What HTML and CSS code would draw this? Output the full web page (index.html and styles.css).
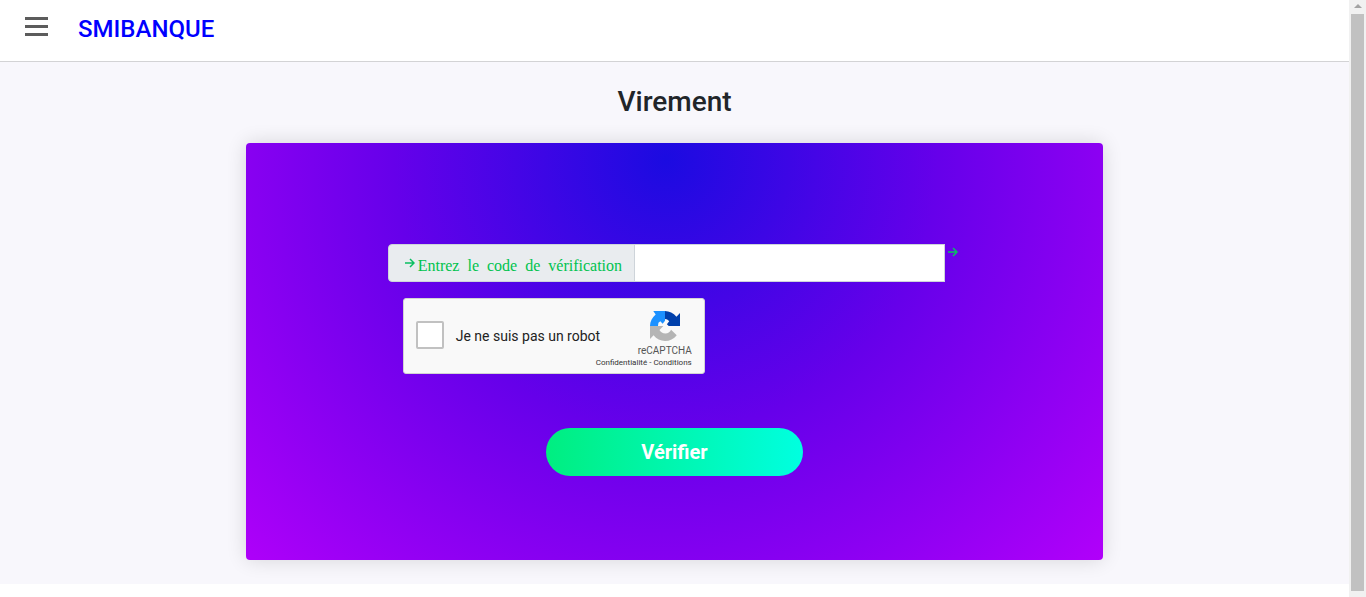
FILE: index.html
```html
<!DOCTYPE html>
<html lang="fr">
<head>
<meta charset="utf-8">
<meta name="viewport" content="width=device-width, initial-scale=1">
<title>SMIBANQUE - Virement</title>
<link rel="stylesheet" href="styles.css">
</head>
<body>
<div class="page">
  <header class="topbar">
    <button class="menu-button" type="button" aria-label="Menu">
      <span class="menu-line"></span><span class="menu-line"></span><span class="menu-line"></span>
    </button>
    <a class="brand" href="#">SMIBANQUE</a>
  </header>
  <main class="content">
    <h1 class="title">Virement</h1>
    <form class="card">
      <div class="fields">
        <div class="code-group">
          <label class="code-label" for="code">
            <svg class="arrow" viewBox="0 0 10 10" aria-hidden="true"><path d="M0 5H9M5 1L9 5L5 9"/></svg>
            <span>Entrez&nbsp; le&nbsp; code&nbsp; de&nbsp; vérification</span>
          </label>
          <input class="code-input" id="code" type="text">
          <span class="code-end"><svg class="arrow" viewBox="0 0 10 10" aria-hidden="true"><path d="M0 5H9M5 1L9 5L5 9"/></svg></span>
        </div>
        <div class="captcha">
          <input class="captcha-box" id="robot" type="checkbox">
          <label class="captcha-label" for="robot">Je ne suis pas un robot</label>
          <div class="captcha-brand">
            <svg class="captcha-logo" viewBox="0 0 64 64" aria-hidden="true">
              <path fill="#0040ab" d="M64 32V4.500L56.400 12.100C50.200 4.500 40.900 0 31.900 0V17C36.800 17 39 19 41 22L36 28L40 32Z"/>
              <path fill="#1c91ff" d="M32 0H7L12.100 7.600C4.500 13.800 0 23 0 32H17L18 25L22 22L27 27L32 21Z"/>
              <path fill="#b5b5b5" d="M0 32V59.500L7.600 51.900C13.800 59.500 22.500 64 32 64C42 64 51 59.500 57 51.500L45 40C43 44.500 38 48 33 48C27 48 23 45 20.200 40.500L28.500 32Z"/>
            </svg>
            <span class="captcha-name">reCAPTCHA</span>
            <span class="captcha-links"><a href="#">Confidentialité</a> - <a href="#">Conditions</a></span>
          </div>
        </div>
      </div>
      <button class="submit" type="submit">Vérifier</button>
    </form>
  </main>
</div>
<div class="scrollbar" aria-hidden="true">
  <span class="scroll-up"></span>
  <span class="scroll-thumb"></span>
</div>
</body>
</html>
```
FILE: styles.css
```css
* {
  box-sizing: border-box;
}

body {
  margin: 0;
  display: flex;
  min-height: 100vh;
  background: #fff;
  color: #212529;
  font-family: Roboto, "Liberation Sans", sans-serif;
}

a {
  color: inherit;
  text-decoration: none;
}

.page {
  flex: 1;
  min-width: 0;
}

.topbar {
  display: flex;
  align-items: center;
  gap: 30px;
  padding: 12px 25px 14px;
  border-bottom: 1px solid #d3d3d5;
}

.menu-button {
  display: flex;
  flex-direction: column;
  gap: 5px;
  width: 23px;
  padding: 0 0 6px;
  border: 0;
  background: none;
}

.menu-line {
  height: 3px;
  background: #5c5c5c;
}

.brand {
  color: #00f;
  font-size: 24px;
  font-weight: 500;
  line-height: 35px;
}

.content {
  display: flex;
  flex-direction: column;
  align-items: center;
  padding: 23px 16px 24px;
  background: #f8f7fc;
}

.title {
  margin: 0 0 24px;
  font-size: 28px;
  font-weight: 500;
  line-height: 34px;
}

.card {
  display: flex;
  flex-direction: column;
  align-items: center;
  gap: 54px;
  width: 65%;
  padding: 101px 0 84px;
  border-radius: 4px;
  background: radial-gradient(circle at 49% 4%, #1b0be1 0%, #6600ea 46%, #b100fa 100%);
  box-shadow: 0 0 20px rgba(0, 0, 0, 0.14);
}

.fields {
  display: flex;
  flex-direction: column;
  gap: 16px;
  width: 67%;
}

.code-group {
  display: flex;
}

.code-label {
  display: flex;
  align-items: center;
  gap: 3px;
  height: 38px;
  padding: 6px 12px 0 16px;
  border: 1px solid #ced4da;
  border-radius: 4px 0 0 4px;
  background: #e9ecef;
  color: #00c34e;
  font-family: "Liberation Serif", serif;
  font-size: 16px;
  line-height: 24px;
  white-space: nowrap;
}

.arrow {
  flex: none;
  width: 10px;
  height: 10px;
  fill: none;
  stroke: #0abf62;
  stroke-width: 1.500;
}

.code-label .arrow {
  margin-bottom: 6px;
}

.code-input {
  flex: 1;
  min-width: 0;
  height: 38px;
  margin-left: -1px;
  padding: 6px 12px;
  border: 1px solid #ced4da;
  border-radius: 0;
  background: #fff;
  font-size: 16px;
}

.code-end {
  display: flex;
  padding: 3px 3px 0 3px;
}

.captcha {
  display: flex;
  align-items: center;
  width: 302px;
  height: 76px;
  margin-left: 15px;
  padding: 0 12px;
  border: 1px solid #d3d3d3;
  border-radius: 3px;
  background: #f9f9f9;
}

.captcha-box {
  appearance: none;
  flex: none;
  width: 28px;
  height: 28px;
  margin: 0 12px 2px 0;
  border: 2px solid #c1c1c1;
  border-radius: 2px;
  background: #fff;
}

.captcha-label {
  color: #222;
  font-size: 14px;
  line-height: 17px;
  white-space: nowrap;
}

.captcha-brand {
  display: flex;
  flex-direction: column;
  align-items: flex-end;
  flex: 1;
  width: 0;
  color: #555;
  padding-top: 8px;
}

.captcha-logo {
  width: 30px;
  height: 30px;
  margin: 0 12px 4px 0;
}

.captcha-name {
  font-size: 10px;
  line-height: 12px;
}

.captcha-links {
  color: #333;
  font-size: 8px;
  line-height: 12px;
  white-space: nowrap;
}

.submit {
  width: 30%;
  height: 48px;
  border: 0;
  border-radius: 24px;
  background: linear-gradient(to right, #00ee80, #00ffe0);
  color: #fff;
  font-family: inherit;
  font-size: 20px;
  font-weight: 700;
}

.scrollbar {
  position: sticky;
  top: 0;
  display: flex;
  flex-direction: column;
  align-items: center;
  width: 17px;
  height: 100vh;
  padding: 4px 2px 6px;
  background: #f1f1f1;
}

.scroll-up {
  border: 4px solid transparent;
  border-top: 0;
  border-bottom: 4px solid #a3a3a3;
  margin-bottom: 6px;
}

.scroll-thumb {
  flex: 1;
  width: 13px;
  background: #c1c1c1;
}
```
